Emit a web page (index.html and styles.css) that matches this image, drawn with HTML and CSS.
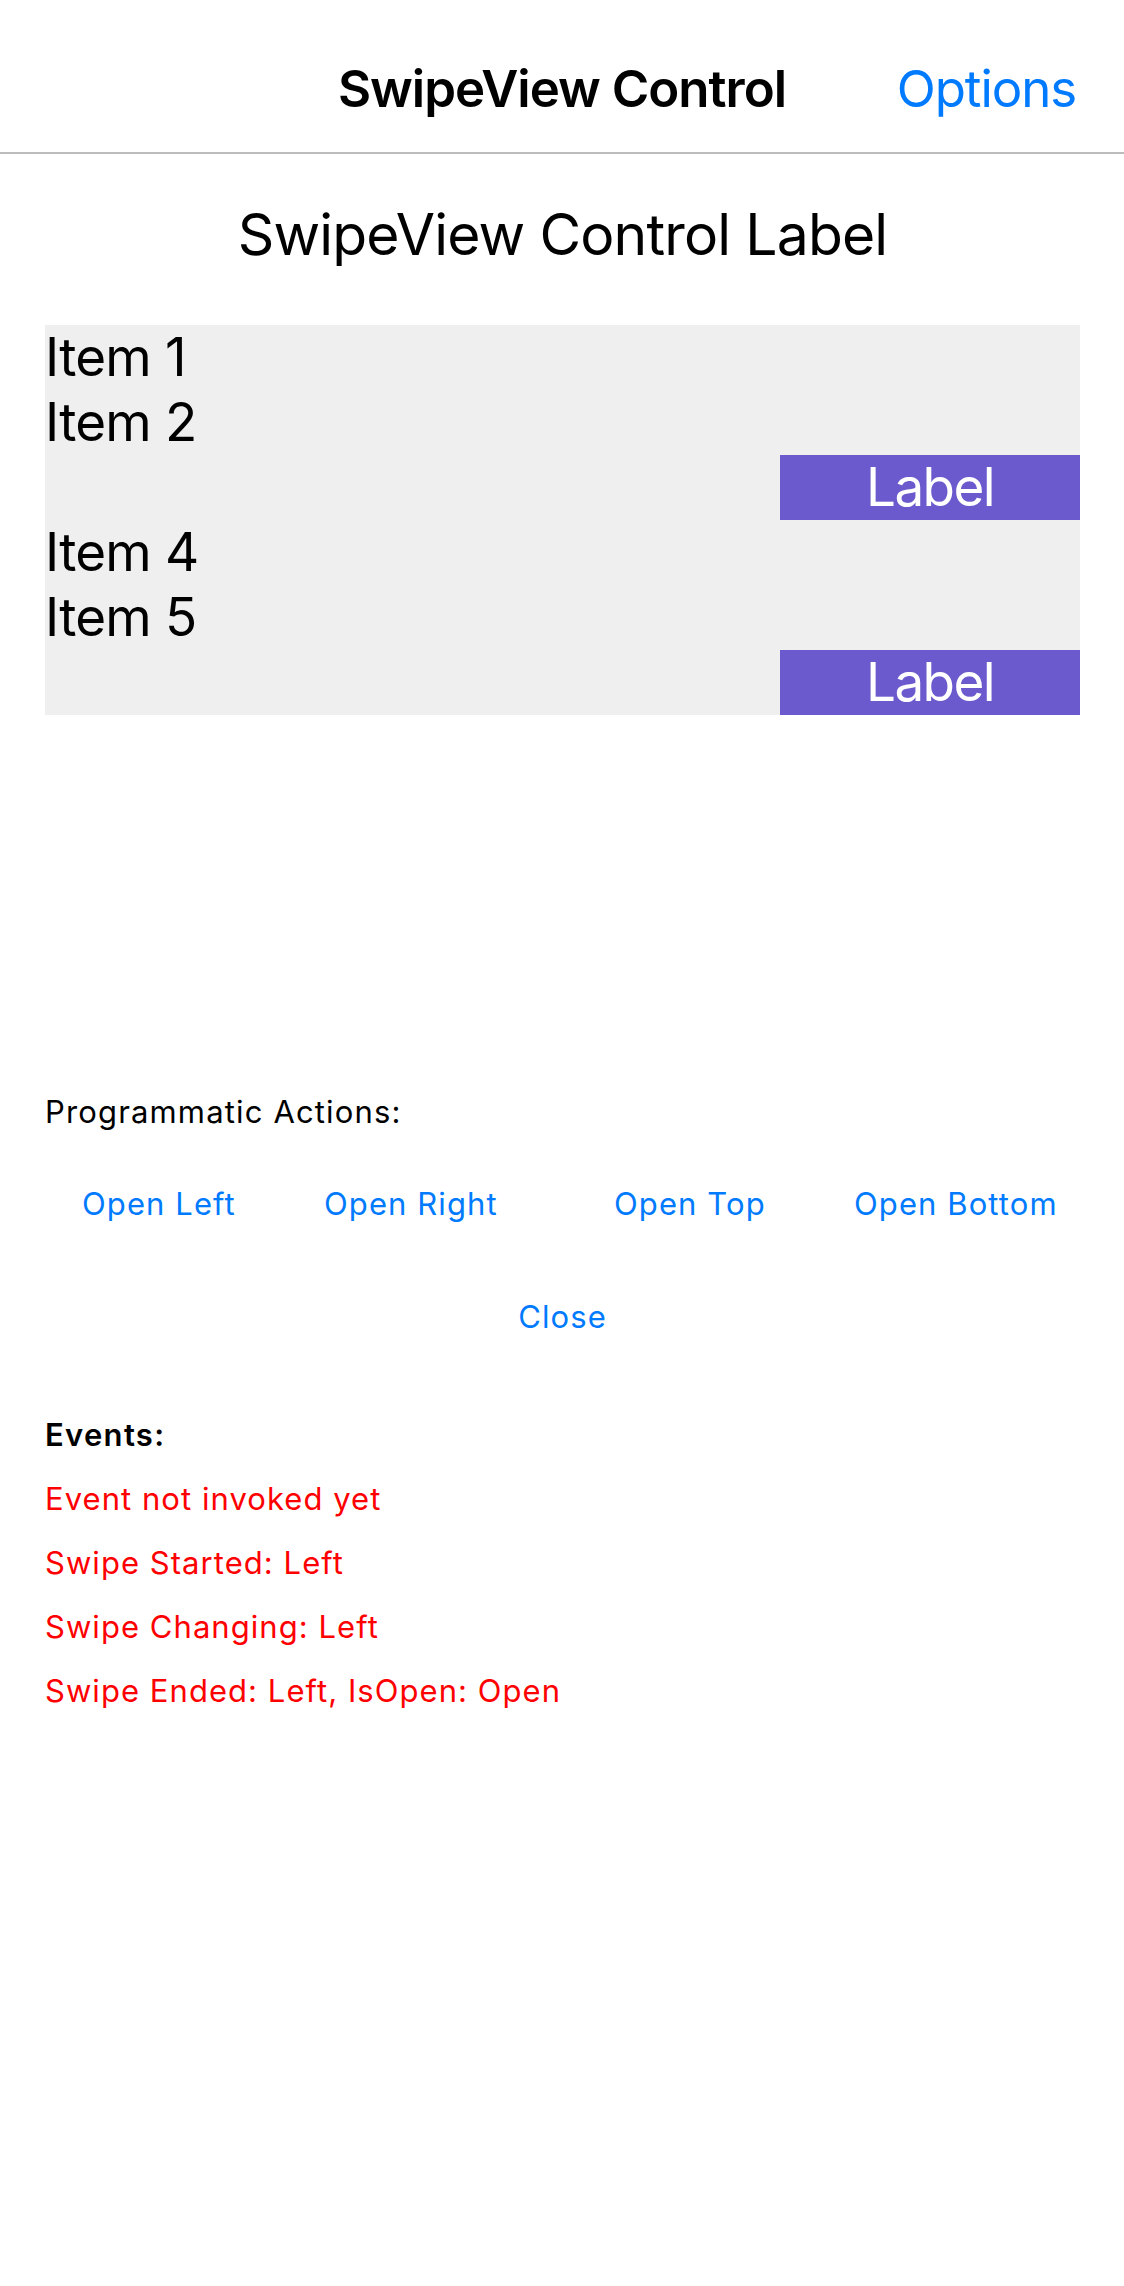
FILE: index.html
```html
<!DOCTYPE html>
<html>
<head>
<meta charset="utf-8">
<link rel="stylesheet" href="styles.css">
</head>
<body>
<header class="navbar">
  <div class="nav-side"></div>
  <div class="nav-title">SwipeView Control</div>
  <div class="nav-side nav-right"><span class="nav-action">Options</span></div>
</header>
<main class="page">
  <h1 class="page-title">SwipeView Control Label</h1>
  <div class="swipe-list">
    <div class="row"><span class="item">Item 1</span></div>
    <div class="row"><span class="item">Item 2</span></div>
    <div class="row"><span class="item"></span><span class="swipe-label">Label</span></div>
    <div class="row"><span class="item">Item 4</span></div>
    <div class="row"><span class="item">Item 5</span></div>
    <div class="row"><span class="item"></span><span class="swipe-label">Label</span></div>
  </div>
  <div class="section-label">Programmatic Actions:</div>
  <div class="actions">
    <span class="btn">Open Left</span>
    <span class="btn">Open Right</span>
    <span class="btn">Open Top</span>
    <span class="btn">Open Bottom</span>
  </div>
  <div class="close-row"><span class="btn">Close</span></div>
  <div class="events">
    <div class="events-title">Events:</div>
    <div class="event">Event not invoked yet</div>
    <div class="event">Swipe Started: Left</div>
    <div class="event">Swipe Changing: Left</div>
    <div class="event">Swipe Ended: Left, IsOpen: Open</div>
  </div>
</main>
</body>
</html>
```
FILE: styles.css
```css
html, body {
  margin: 0;
  padding: 0;
  background: #ffffff;
}
body {
  font-family: Inter, "Noto Sans", "Liberation Sans", sans-serif;
  color: #000;
  width: 1124px;
}
.navbar {
  box-sizing: border-box;
  height: 154px;
  padding-top: 63px;
  border-bottom: 2px solid #bcbcbc;
  display: grid;
  grid-template-columns: 1fr auto 1fr;
  align-items: start;
}
.nav-title {
  font-size: 51px;
  font-weight: 600;
  line-height: 1;
  letter-spacing: -1px;
}
.nav-right {
  display: flex;
  justify-content: flex-end;
  padding-right: 48px;
}
.nav-action {
  font-size: 51px;
  line-height: 1;
  color: #007aff;
  letter-spacing: -1.1px;
}
.page {
  padding: 0 44px 0 45px;
}
.page-title {
  margin: 52px 0 0 0;
  font-size: 57px;
  font-weight: 400;
  line-height: 1;
  text-align: center;
  letter-spacing: -0.85px;
}
.swipe-list {
  margin-top: 62px;
  background: #efefef;
  display: flex;
  flex-direction: column;
}
.row {
  height: 65px;
  display: flex;
  justify-content: space-between;
  align-items: stretch;
}
.item {
  font-size: 53px;
  line-height: 65px;
  letter-spacing: -0.8px;
}
.swipe-label {
  width: 300px;
  background: #6a5acd;
  color: #fff;
  font-size: 53px;
  line-height: 65px;
  text-align: center;
  letter-spacing: -1.6px;
}
.section-label {
  margin-top: 379px;
  font-size: 31px;
  line-height: 36px;
  letter-spacing: 1.15px;
}
.actions {
  margin-top: 56px;
  display: grid;
  grid-template-columns: 242px 290px 240px auto;
  padding-left: 37px;
}
.btn {
  font-size: 31px;
  line-height: 36px;
  color: #007aff;
  letter-spacing: 1.1px;
}
.close-row {
  margin-top: 77px;
  display: flex;
  justify-content: center;
}
.events {
  margin-top: 68px;
  font-size: 31px;
  line-height: 64px;
  letter-spacing: 1.05px;
}
.events-title {
  font-weight: 600;
  letter-spacing: 1.3px;
}
.event {
  color: #ff0000;
}
```
